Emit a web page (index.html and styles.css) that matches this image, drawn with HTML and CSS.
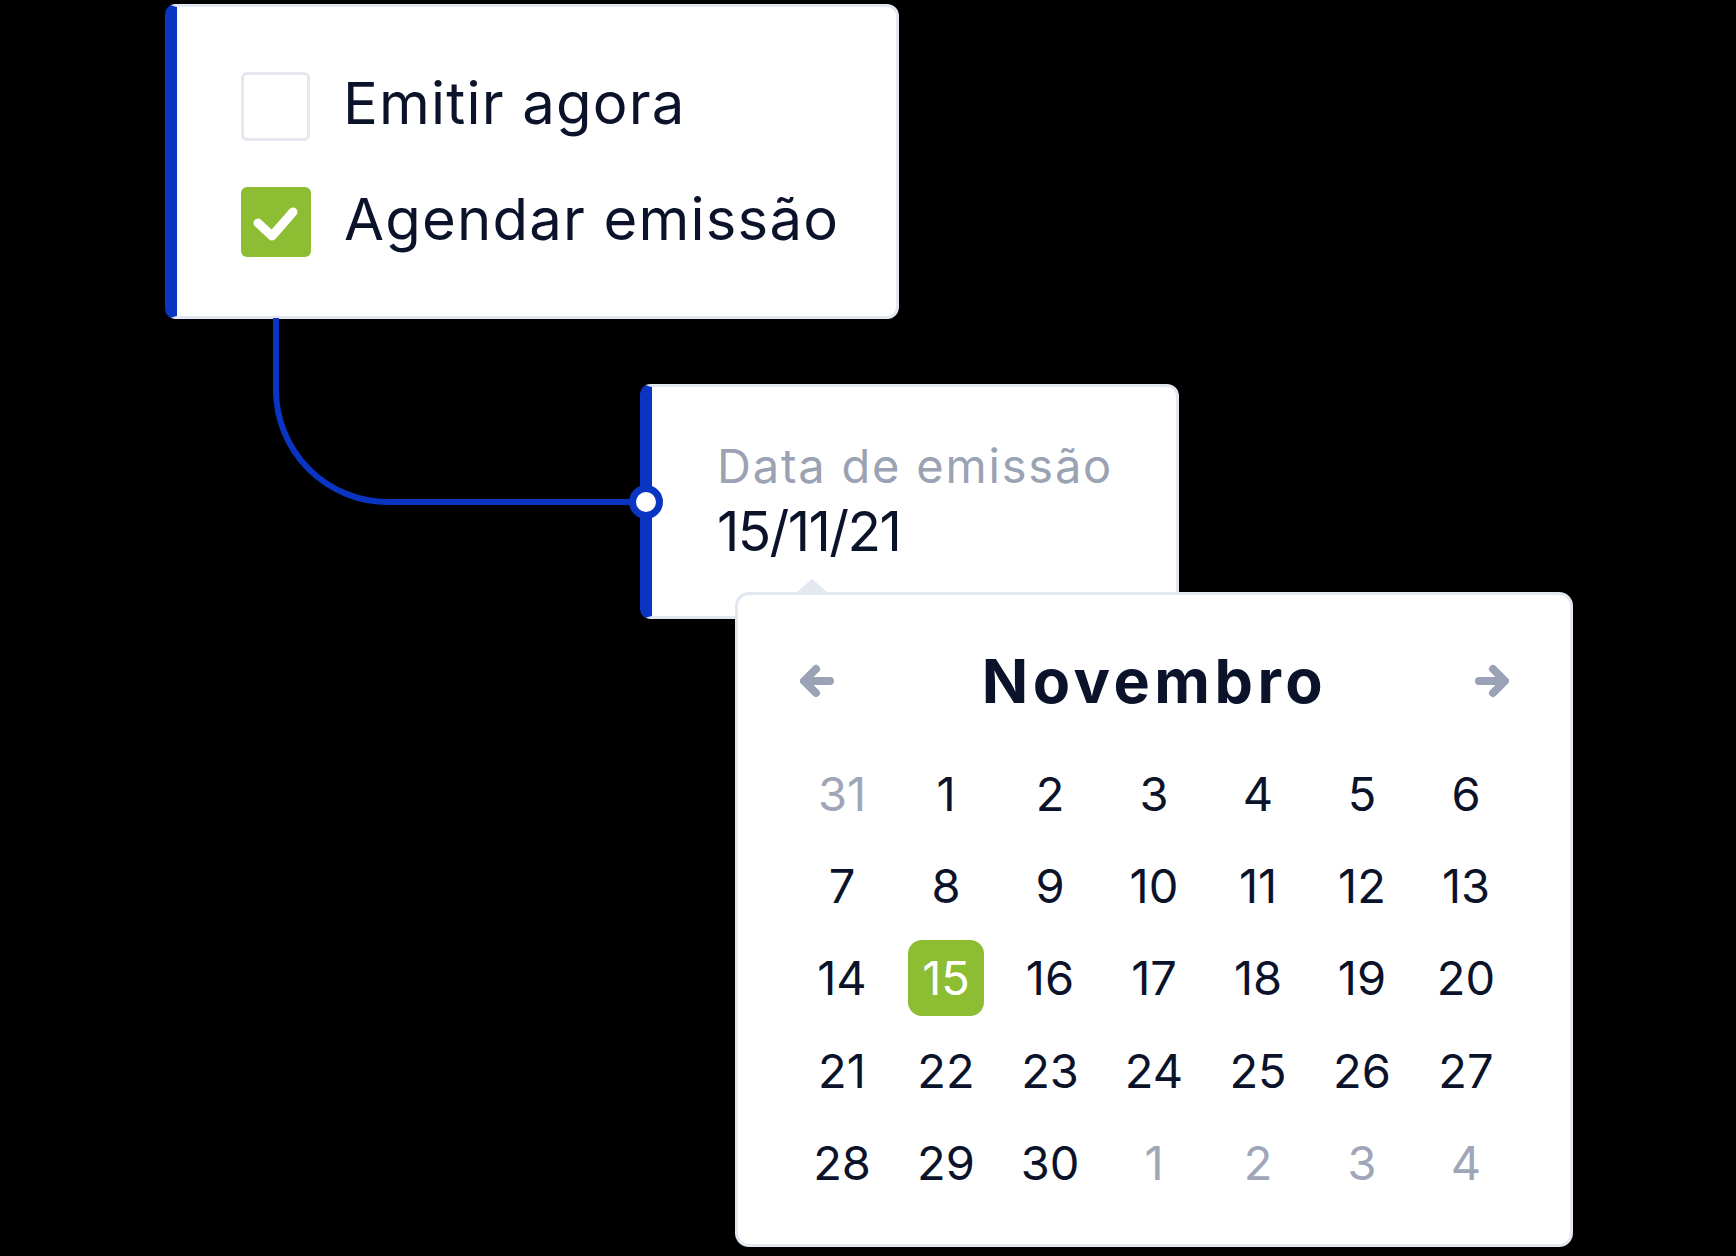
FILE: index.html
```html
<!DOCTYPE html>
<html lang="pt-BR">
<head>
    <meta charset="UTF-8">
    <meta name="viewport" content="width=device-width, initial-scale=1.0">
    <title>Agendar emissão</title>
    <link rel="stylesheet" href="styles.css">
</head>
<body>
    <div class="stage">
        <!-- Emission mode -->
        <div class="card options">
            <label class="option">
                <span class="check"></span>
                <span class="option-text">Emitir agora</span>
            </label>
            <label class="option">
                <span class="check checked">
                    <svg viewBox="0 0 70 70" width="70" height="70">
                        <path d="M17 36 L31 49 L52 25" fill="none" stroke="#fff" stroke-width="9" stroke-linecap="round" stroke-linejoin="round"/>
                    </svg>
                </span>
                <span class="option-text">Agendar emissão</span>
            </label>
        </div>

        <!-- Date field -->
        <div class="card date-field">
            <div class="field-label">Data de emissão</div>
            <div class="field-value">15/11/21</div>
        </div>

        <!-- Connector between the two cards -->
        <svg class="connector" width="1736" height="1256" viewBox="0 0 1736 1256">
            <path d="M276 318 V390 A112 112 0 0 0 388 502 H640" fill="none" stroke="#0a34c2" stroke-width="6"/>
            <circle cx="646" cy="502" r="13.5" fill="#fff" stroke="#0a34c2" stroke-width="7"/>
        </svg>

        <!-- Calendar popup -->
        <div class="calendar">
            <div class="cal-header">
                <button class="nav">
                    <svg viewBox="0 0 34 34" width="34" height="34">
                        <path d="M30 17 H5 M16 5 L4 17 L16 29" fill="none" stroke="#9aa2b5" stroke-width="8" stroke-linecap="round" stroke-linejoin="round"/>
                    </svg>
                </button>
                <div class="month">Novembro</div>
                <button class="nav">
                    <svg viewBox="0 0 34 34" width="34" height="34">
                        <path d="M4 17 H29 M18 5 L30 17 L18 29" fill="none" stroke="#9aa2b5" stroke-width="8" stroke-linecap="round" stroke-linejoin="round"/>
                    </svg>
                </button>
            </div>
            <div class="days">
                <span class="day muted">31</span>
                <span class="day">1</span>
                <span class="day">2</span>
                <span class="day">3</span>
                <span class="day">4</span>
                <span class="day">5</span>
                <span class="day">6</span>
                <span class="day">7</span>
                <span class="day">8</span>
                <span class="day">9</span>
                <span class="day">10</span>
                <span class="day">11</span>
                <span class="day">12</span>
                <span class="day">13</span>
                <span class="day">14</span>
                <span class="day"><span class="selected">15</span></span>
                <span class="day">16</span>
                <span class="day">17</span>
                <span class="day">18</span>
                <span class="day">19</span>
                <span class="day">20</span>
                <span class="day">21</span>
                <span class="day">22</span>
                <span class="day">23</span>
                <span class="day">24</span>
                <span class="day">25</span>
                <span class="day">26</span>
                <span class="day">27</span>
                <span class="day">28</span>
                <span class="day">29</span>
                <span class="day">30</span>
                <span class="day muted">1</span>
                <span class="day muted">2</span>
                <span class="day muted">3</span>
                <span class="day muted">4</span>
            </div>
        </div>
    </div>
</body>
</html>
```

FILE: styles.css
```css
/* General Styles */
body {
    margin: 0;
    padding: 0;
    background: #000;
    font-family: 'Inter', 'Open Sans', sans-serif;
    color: #0b132b;
    font-variant-numeric: proportional-nums;
}

.stage {
    position: relative;
    width: 1736px;
    height: 1256px;
    overflow: hidden;
}

/* Cards */
.card {
    position: absolute;
    box-sizing: border-box;
    background: #fff;
    border: 3px solid #e2e7f0;
    border-left: 12px solid #0a34c2;
    border-radius: 10px 12px 12px 10px;
}

.options {
    left: 165px;
    top: 4px;
    width: 734px;
    height: 315px;
    padding: 65px 0 0 64px;
    display: flex;
    flex-direction: column;
    gap: 46px;
}

.option {
    display: flex;
    align-items: center;
    gap: 33px;
}

.check {
    box-sizing: border-box;
    width: 69px;
    height: 69px;
    border: 3px solid #e4e7ee;
    border-radius: 6px;
    display: flex;
}

.check.checked {
    border: none;
    width: 70px;
    height: 70px;
    background: #8cbd32;
}

.option-text {
    font-size: 58px;
    line-height: 1;
    letter-spacing: 1.2px;
    padding-bottom: 7px;
}

.date-field {
    left: 640px;
    top: 384px;
    width: 539px;
    height: 235px;
    padding: 55px 0 0 65px;
}

.field-label {
    font-size: 47px;
    line-height: 1;
    color: #9aa2b3;
    letter-spacing: 1.8px;
}

.field-value {
    margin-top: 15px;
    font-size: 55px;
    line-height: 1;
    letter-spacing: -1.6px;
}

/* Connector */
.connector {
    position: absolute;
    left: 0;
    top: 0;
}

/* Calendar */
.calendar {
    position: absolute;
    left: 735px;
    top: 592px;
    width: 838px;
    height: 655px;
    box-sizing: border-box;
    background: #fff;
    border: 3px solid #e2e7f0;
    border-radius: 14px;
    padding: 46px 52px 0;
}

.calendar::before {
    content: "";
    position: absolute;
    top: -16px;
    left: 59px;
    border-left: 15px solid transparent;
    border-right: 15px solid transparent;
    border-bottom: 13px solid #e2e7f0;
}

.cal-header {
    height: 80px;
    display: flex;
    align-items: center;
    justify-content: space-between;
    padding: 0 9px 0 10px;
}

.nav {
    background: none;
    border: none;
    padding: 0;
    width: 34px;
    height: 34px;
    display: flex;
}

.month {
    font-size: 61px;
    font-weight: 700;
    line-height: 1;
    letter-spacing: 4.5px;
}

.days {
    margin-top: 26px;
    display: grid;
    grid-template-columns: repeat(7, 1fr);
    grid-auto-rows: 92.4px;
}

.day {
    display: flex;
    align-items: center;
    justify-content: center;
    font-size: 47px;
    line-height: 1;
}

.day.muted {
    color: #9ea6b8;
}

.selected {
    width: 76px;
    height: 76px;
    border-radius: 14px;
    background: #8cbd32;
    color: #fff;
    display: flex;
    align-items: center;
    justify-content: center;
}
```
